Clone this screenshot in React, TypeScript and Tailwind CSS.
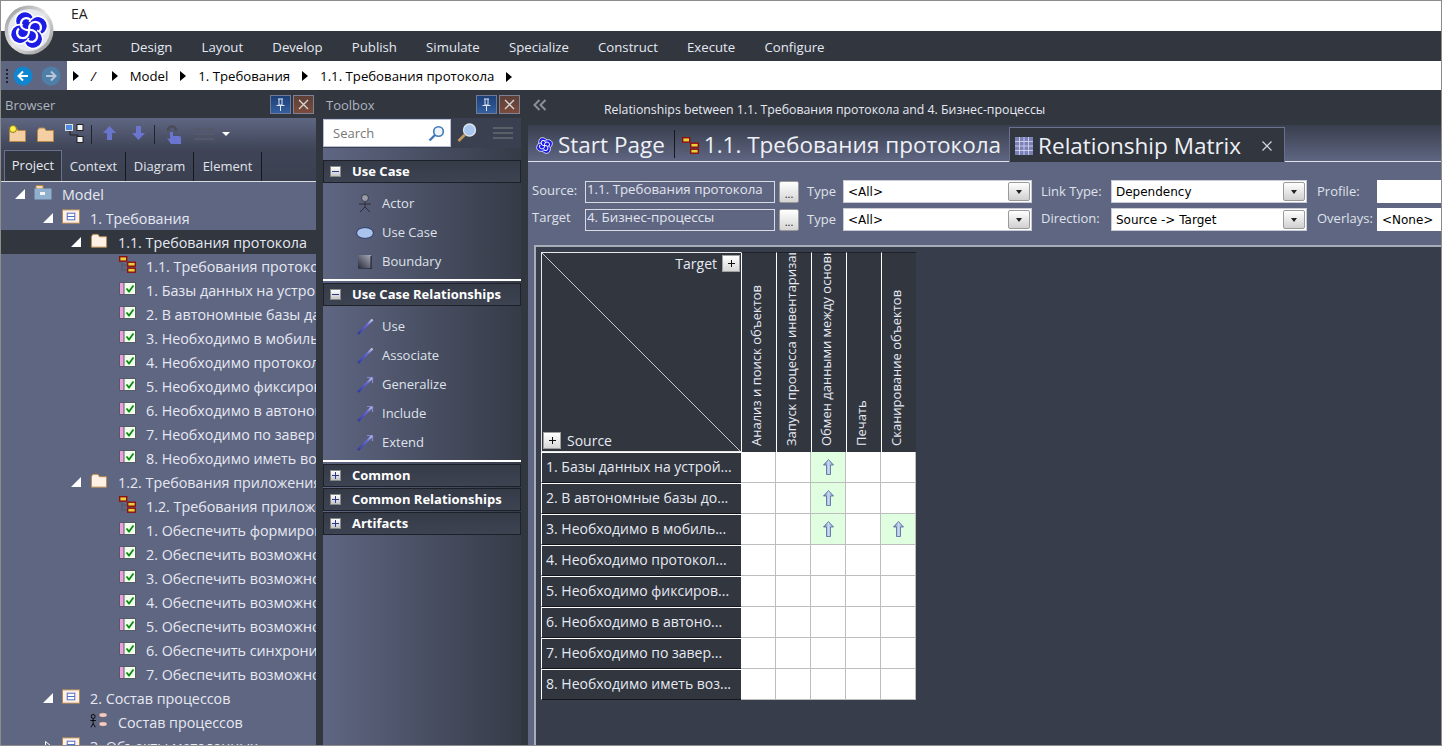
import { ReactNode } from 'react';

const ribbonTabs = ['Start', 'Design', 'Layout', 'Develop', 'Publish', 'Simulate', 'Specialize', 'Construct', 'Execute', 'Configure'];
const crumbs = ['/', 'Model', '1. Требования', '1.1. Требования протокола'];

type Kind = 'model' | 'package' | 'folder' | 'diagram' | 'req' | 'usecase';
interface Row {
  depth: 0 | 1 | 2 | 3;
  label: string;
  kind: Kind;
  toggle?: 'open' | 'closed';
  selected?: boolean;
}

const req = (label: string): Row => ({ depth: 3, label, kind: 'req' });

const rows: Row[] = [
  { depth: 0, label: 'Model', kind: 'model', toggle: 'open' },
  { depth: 1, label: '1. Требования', kind: 'package', toggle: 'open' },
  { depth: 2, label: '1.1. Требования протокола', kind: 'folder', toggle: 'open', selected: true },
  { depth: 3, label: '1.1. Требования протокола', kind: 'diagram' },
  req('1. Базы данных на устройстве'),
  req('2. В автономные базы данных'),
  req('3. Необходимо в мобильном'),
  req('4. Необходимо протоколировать'),
  req('5. Необходимо фиксировать'),
  req('6. Необходимо в автономном'),
  req('7. Необходимо по завершении'),
  req('8. Необходимо иметь возможность'),
  { depth: 2, label: '1.2. Требования приложения', kind: 'folder', toggle: 'open' },
  { depth: 3, label: '1.2. Требования приложения', kind: 'diagram' },
  req('1. Обеспечить формирование'),
  req('2. Обеспечить возможность'),
  req('3. Обеспечить возможность'),
  req('4. Обеспечить возможность'),
  req('5. Обеспечить возможность'),
  req('6. Обеспечить синхронизацию'),
  req('7. Обеспечить возможность'),
  { depth: 1, label: '2. Состав процессов', kind: 'package', toggle: 'open' },
  { depth: 2, label: 'Состав процессов', kind: 'usecase' },
  { depth: 1, label: '3. Объекты метаданных', kind: 'package', toggle: 'closed' },
];

const depthPad = ['pl-[15px]', 'pl-[43px]', 'pl-[71px]', 'pl-[99px]'];

const matrixCols = ['Анализ и поиск объектов', 'Запуск процесса инвентаризации', 'Обмен данными между основной', 'Печать', 'Сканирование объектов'];
const matrixRows = [
  { label: '1. Базы данных на устрой...', marks: [2] },
  { label: '2. В автономные базы до...', marks: [2] },
  { label: '3. Необходимо в мобиль...', marks: [2, 4] },
  { label: '4. Необходимо протокол...', marks: [] },
  { label: '5. Необходимо фиксиров...', marks: [] },
  { label: '6. Необходимо в автоно...', marks: [] },
  { label: '7. Необходимо по завер...', marks: [] },
  { label: '8. Необходимо иметь воз...', marks: [] },
];

function Logo({ size, ring = true }: { size: number; ring?: boolean }) {
  return (
    <svg width={size} height={size} viewBox="-25 -25 50 50">
      <defs>
        <linearGradient id="ring" x1="0" y1="0" x2="1" y2="1">
          <stop offset="0" stopColor="#8e8e8e" />
          <stop offset="0.5" stopColor="#e4e4e4" />
          <stop offset="1" stopColor="#8a8a8a" />
        </linearGradient>
      </defs>
      {ring && <circle r="24.5" fill="url(#ring)" />}
      {ring && <circle r="21" fill="#e6e8f0" />}
      <g transform="rotate(20)">
        {[0, 90, 180, 270].map((a) => (
          <circle key={a} transform={`rotate(${a})`} cx="-7" cy="-7" r="9.5" fill="#1c1ce6" stroke="#ffffff" strokeWidth="1.6" />
        ))}
        <circle r="8" fill="#1c1ce6" />
        {[0, 90, 180, 270].map((a) => (
          <path
            key={a}
            transform={`rotate(${a})`}
            d="M0 0 C-2 -4 -1 -9 4 -10 C9 -11 12 -6 10 -2"
            fill="none"
            stroke="#ffffff"
            strokeWidth="2.2"
          />
        ))}
      </g>
    </svg>
  );
}

function FolderIcon({ fill = '#f3cfa3', stroke = '#b78848', w = 19 }: { fill?: string; stroke?: string; w?: number }) {
  return (
    <svg width={w} height="17" viewBox="0 0 19 17">
      <path d="M1.5 4.5 V15.5 H17.5 V4.5 H10 L8.5 2 H3 L1.5 4.5 Z" fill={fill} stroke={stroke} />
    </svg>
  );
}

function ModelIcon() {
  return (
    <svg width="18" height="18" viewBox="0 0 18 18">
      <path d="M2 2.5 H9 V6 H2 Z" fill="#f7dcbc" stroke="#b78848" />
      <path d="M0.5 5.5 H17.5 V16.5 H0.5 Z" fill="#8fb0cf" />
      <rect x="6" y="9" width="5" height="3" fill="#f2f4f6" />
    </svg>
  );
}

function PackageIcon() {
  return (
    <svg width="19" height="15" viewBox="0 0 19 15">
      <rect x="0.5" y="0.5" width="18" height="14" fill="#fff1e6" stroke="#b58a52" />
      <rect x="5.5" y="4" width="8" height="7" fill="#ffffff" stroke="#4467c4" />
      <path d="M5.5 7.5 H13.5" stroke="#4467c4" />
    </svg>
  );
}

function DiagramTreeIcon({ w = 17 }: { w?: number }) {
  return (
    <svg width={w} height="17" viewBox="0 0 17 17">
      <path d="M3 5 V14 H8 M3 9 H8" fill="none" stroke="#555a66" strokeWidth="1.2" />
      <rect x="0.7" y="0.7" width="7" height="4.4" fill="#e8d23c" stroke="#8c1010" strokeWidth="1.4" />
      <rect x="8.7" y="6.2" width="7.6" height="4" fill="#e8d23c" stroke="#8c1010" strokeWidth="1.4" />
      <rect x="8.7" y="12.2" width="7.6" height="4" fill="#e8d23c" stroke="#8c1010" strokeWidth="1.4" />
    </svg>
  );
}

function RequirementIcon() {
  return (
    <svg width="17" height="13" viewBox="0 0 17 13">
      <rect x="0.5" y="0.5" width="16" height="12" fill="#efffe9" stroke="#555a66" />
      <rect x="1" y="1" width="4" height="11" fill="#eaa0da" />
      <path d="M5 1 V12" stroke="#555a66" />
      <path d="M7.5 6.5 L10 9.5 L14.5 3.5" fill="none" stroke="#0a8a10" strokeWidth="1.8" />
    </svg>
  );
}

function UseCaseDiagramIcon() {
  return (
    <svg width="20" height="19" viewBox="0 0 20 19">
      <circle cx="3.5" cy="5" r="2.2" fill="none" stroke="#000" />
      <path d="M3.5 7 V13 M0.5 9.5 H6.5 M3.5 13 L1 17 M3.5 13 L6 17" fill="none" stroke="#000" />
      <ellipse cx="14.5" cy="3.5" rx="4.5" ry="2.5" fill="#f6c9c4" stroke="#555" strokeWidth="0.5" />
      <ellipse cx="14.5" cy="13.5" rx="4.5" ry="2.5" fill="#f6c9c4" stroke="#555" strokeWidth="0.5" />
    </svg>
  );
}

function TreeIcon({ kind }: { kind: Kind }) {
  if (kind === 'model') return <ModelIcon />;
  if (kind === 'package') return <PackageIcon />;
  if (kind === 'folder') return <FolderIcon fill="#fff1e6" />;
  if (kind === 'diagram') return <DiagramTreeIcon />;
  if (kind === 'usecase') return <UseCaseDiagramIcon />;
  return <RequirementIcon />;
}

function Toggle({ state }: { state?: 'open' | 'closed' }) {
  if (!state) return <span className="w-[10px] shrink-0" />;
  return (
    <svg width="10" height="10" viewBox="0 0 10 10" className="shrink-0">
      {state === 'open' ? (
        <path d="M10 0 V10 H0 Z" fill="#ffffff" />
      ) : (
        <path d="M2.5 0.5 L8 5 L2.5 9.5 Z" fill="none" stroke="#ffffff" />
      )}
    </svg>
  );
}

function PaneButtons() {
  return (
    <div className="flex gap-[2px]">
      <div className="w-[21px] h-[19px] border border-[#6f7896] bg-gradient-to-b from-[#1d3f78] to-[#345f9e] flex items-center justify-center">
        <svg width="11" height="13" viewBox="0 0 11 13">
          <path d="M3 1 H8 M4 1 V7 H7 V1 M1.5 7.5 H9.5 M5.5 8 V13" fill="none" stroke="#dfe6f3" />
        </svg>
      </div>
      <div className="w-[21px] h-[19px] border border-[#7d8296] bg-gradient-to-b from-[#5c4038] to-[#7c4a3a] flex items-center justify-center">
        <svg width="11" height="11" viewBox="0 0 11 11">
          <path d="M1 1 L10 10 M10 1 L1 10" stroke="#d8d8d8" strokeWidth="1.3" />
        </svg>
      </div>
    </div>
  );
}

function BrowserToolbar() {
  return (
    <div className="h-[32px] shrink-0 bg-gradient-to-b from-[#5f6682] to-[#3f4557] flex items-center pl-[8px]">
      <div className="relative mr-[9px]">
        <FolderIcon />
        <span className="absolute left-[1px] -top-[1px] w-[8px] h-[8px] rounded-full bg-[#fff14a] border border-[#8a7a20]" />
      </div>
      <div className="mr-[10px]">
        <FolderIcon />
      </div>
      <svg width="19" height="19" viewBox="0 0 19 19" className="mb-[1px]">
        <path d="M5 6 V11 H13 V14" fill="none" stroke="#222" />
        <rect x="0.5" y="0.5" width="7" height="6" fill="#4d8de0" stroke="#ddd" />
        <rect x="12" y="0.5" width="6" height="6" fill="#f4f4f4" stroke="#222" />
        <rect x="12" y="12.5" width="6" height="6" fill="#f4f4f4" stroke="#222" />
      </svg>
      <span className="w-px h-[19px] bg-[#20242e] ml-[7px] mr-[11px]" />
      <svg width="13" height="14" viewBox="0 0 13 14" className="mb-[2px]">
        <path d="M6.5 0 L13 7 H9 V14 H4 V7 H0 Z" fill="#6a75d0" />
      </svg>
      <svg width="13" height="14" viewBox="0 0 13 14" className="ml-[16px] mb-[2px]">
        <path d="M6.5 14 L13 7 H9 V0 H4 V7 H0 Z" fill="#6a75d0" />
      </svg>
      <span className="w-px h-[19px] bg-[#20242e] ml-[9px] mr-[11px]" />
      <svg width="16" height="20" viewBox="0 0 16 20">
        <path d="M2 7 C2 1 10 1 10 7" fill="none" stroke="#4a4d58" strokeWidth="2.5" />
        <path d="M4 8 H7 V12 H13 Q15 12 15 14 V20 H5 L1 14 L4 15 Z" fill="#6a75d0" />
      </svg>
      <div className="ml-[12px] flex flex-col gap-[3px]">
        <span className="w-[20px] h-[2px] bg-[#55596a]" />
        <span className="w-[20px] h-[2px] bg-[#55596a]" />
        <span className="w-[20px] h-[2px] bg-[#55596a]" />
      </div>
      <span className="ml-[8px] w-0 h-0 border-x-[4px] border-x-transparent border-t-[4px] border-t-white" />
    </div>
  );
}

function Browser() {
  return (
    <div className="w-[316px] shrink-0 flex flex-col bg-[#5f6682] overflow-hidden">
      <div className="h-[28px] bg-[#31363f] flex items-center justify-between pr-[2px] pl-[5px] shrink-0">
        <span className="text-[13px] text-[#aeb4c0] mt-[3px]">Browser</span>
        <PaneButtons />
      </div>
      <BrowserToolbar />
      <div className="h-[32px] bg-gradient-to-b from-[#3f4557] to-[#3b4050] flex items-end pl-[4px] border-b border-[#d8dbe2] shrink-0">
        <div className="h-[31px] w-[58px] bg-[#31363f] border border-b-0 border-[#6a7190] flex items-center justify-center text-[13px] text-[#e6e8ee]">Project</div>
        {['Context', 'Diagram', 'Element'].map((tab, i) => (
          <div key={tab} className={`h-[29px] flex items-center justify-center text-[13px] text-[#e0e3ea] border-r border-[#16181e] ${i === 0 ? 'w-[64px]' : 'w-[68px]'}`}>
            {tab}
          </div>
        ))}
      </div>
      {rows.map((row, i) => (
        <div
          key={i}
          className={`h-[24px] shrink-0 flex items-center whitespace-nowrap text-[14.3px] text-[#e6e9f2] ${depthPad[row.depth]} ${row.selected ? 'bg-[#31363f]' : ''}`}
        >
          <Toggle state={row.toggle} />
          <span className="w-[18px] ml-[9px] shrink-0 flex justify-center mb-[4px]">
            <TreeIcon kind={row.kind} />
          </span>
          <span className="ml-[10px] mt-[2px]">{row.label}</span>
        </div>
      ))}
    </div>
  );
}

function SectionHeader({ title, open }: { title: string; open?: boolean }) {
  return (
    <div className="h-[23px] bg-gradient-to-b from-[#363b48] to-[#3e4352] border border-[#1e2129] flex items-center shrink-0">
      <span className="w-[11px] h-[11px] ml-[6px] bg-gradient-to-b from-white to-[#c4c4c4] border border-[#888] flex items-center justify-center">
        <svg width="7" height="7" viewBox="0 0 7 7">
          <path d={open ? 'M0 3.5 H7' : 'M0 3.5 H7 M3.5 0 V7'} stroke="#2a3a8a" />
        </svg>
      </span>
      <span className="ml-[11px] text-[13px] font-bold text-white">{title}</span>
    </div>
  );
}

function Connector({ head }: { head?: boolean }) {
  return (
    <svg width="17" height="17" viewBox="0 0 17 17">
      <defs>
        <linearGradient id="conn" x1="0" y1="1" x2="1" y2="0">
          <stop offset="0" stopColor="#3038a0" />
          <stop offset="0.65" stopColor="#6a6ad8" />
          <stop offset="1" stopColor="#c8d0e0" />
        </linearGradient>
      </defs>
      <path d="M1 16 L15.5 1.5" stroke="url(#conn)" strokeWidth="2.4" />
      {head && <path d="M10 1.5 H15.5 V7" fill="none" stroke="#8a88d8" strokeWidth="1.2" />}
    </svg>
  );
}

function ToolItem({ icon, label }: { icon: ReactNode; label: string }) {
  return (
    <div className="h-[29px] flex items-center">
      <span className="w-[18px] ml-[33px] flex justify-center">{icon}</span>
      <span className="ml-[8px] text-[13px] text-[#dfe2ea]">{label}</span>
    </div>
  );
}

function ToolBody({ children }: { children: ReactNode }) {
  return <div className="pt-[6px] pb-[3px] border-b-2 border-white mb-[2px]">{children}</div>;
}

function Toolbox() {
  return (
    <div className="w-[198px] shrink-0 flex flex-col">
      <div className="h-[28px] bg-[#31363f] flex items-center justify-between pr-[1px] pl-[3px] shrink-0">
        <span className="text-[13px] text-[#aeb4c0] mt-[3px]">Toolbox</span>
        <PaneButtons />
      </div>
      <div className="h-[30px] bg-[#3b4050] flex items-center shrink-0">
        <div className="w-[128px] h-[28px] bg-white border border-[#b9c0d6] flex items-center justify-between pl-[9px] pr-[5px] text-[13px] text-[#777]">
          <span className="mt-[1px]">Search</span>
          <svg width="17" height="17" viewBox="0 0 17 17">
            <circle cx="10.5" cy="6.5" r="4.8" fill="#eef4fb" stroke="#3f78b8" strokeWidth="1.6" />
            <path d="M7 10 L1.5 15.5" stroke="#3f78b8" strokeWidth="2.4" />
          </svg>
        </div>
        <svg width="20" height="20" viewBox="0 0 20 20" className="ml-[6px]">
          <circle cx="12.5" cy="7" r="6" fill="#a9c6ee" stroke="#dfe6f0" strokeWidth="1.3" />
          <path d="M8 11.5 L1.5 18" stroke="#c09a60" strokeWidth="2.6" />
        </svg>
        <div className="ml-[16px] flex flex-col gap-[3px]">
          <span className="w-[20px] h-[2px] bg-[#5b5f68]" />
          <span className="w-[20px] h-[2px] bg-[#5b5f68]" />
          <span className="w-[20px] h-[2px] bg-[#5b5f68]" />
        </div>
      </div>
      <div className="flex-1 pt-[12px] bg-gradient-to-r from-[#5f6682] to-[#363b48]">
        <SectionHeader title="Use Case" open />
        <ToolBody>
          <ToolItem
            label="Actor"
            icon={
              <svg width="14" height="19" viewBox="0 0 14 19">
                <circle cx="7" cy="4" r="3.5" fill="#9a9da8" stroke="#3a3d48" />
                <path d="M7 8 V13 M1 10 H13 M7 13 L2 18 M7 13 L12 18" fill="none" stroke="#2c2f38" />
              </svg>
            }
          />
          <ToolItem
            label="Use Case"
            icon={
              <svg width="18" height="12" viewBox="0 0 18 12">
                <ellipse cx="9" cy="6" rx="8.4" ry="5.4" fill="#a9c3ee" stroke="#2a3a6a" />
              </svg>
            }
          />
          <ToolItem
            label="Boundary"
            icon={
              <svg width="14" height="14" viewBox="0 0 14 14">
                <defs>
                  <linearGradient id="bnd" x1="0" y1="1" x2="1" y2="0">
                    <stop offset="0" stopColor="#2a2c3c" />
                    <stop offset="1" stopColor="#a8aab8" />
                  </linearGradient>
                </defs>
                <rect width="13" height="13" fill="url(#bnd)" />
                <path d="M13 1 V14 H0" fill="none" stroke="#15161e" />
              </svg>
            }
          />
        </ToolBody>
        <SectionHeader title="Use Case Relationships" open />
        <ToolBody>
          <ToolItem label="Use" icon={<Connector />} />
          <ToolItem label="Associate" icon={<Connector />} />
          <ToolItem label="Generalize" icon={<Connector head />} />
          <ToolItem label="Include" icon={<Connector head />} />
          <ToolItem label="Extend" icon={<Connector head />} />
        </ToolBody>
        <div className="flex flex-col gap-[1px]">
          <SectionHeader title="Common" />
          <SectionHeader title="Common Relationships" />
          <SectionHeader title="Artifacts" />
        </div>
      </div>
    </div>
  );
}

function Field({ value, className }: { value: string; className: string }) {
  return (
    <div className={`h-[22px] shrink-0 bg-[#5f6682] border border-[#d8dbe4] pl-[1px] text-[13.3px] leading-[15px] text-[#e2e5ee] whitespace-nowrap overflow-hidden ${className}`}>
      {value}
    </div>
  );
}

function DotsButton() {
  return (
    <div className="w-[20px] h-[22px] shrink-0 ml-[4px] bg-gradient-to-b from-white to-[#d5d5d5] border border-[#9a9a9a] rounded-[2px] flex items-end justify-center text-[11px] leading-[16px] text-[#222]">
      ...
    </div>
  );
}

function Select({ value, className }: { value: string; className: string }) {
  return (
    <div className={`h-[23px] shrink-0 bg-white border border-[#c9ccd6] flex items-center justify-between pl-[4px] pr-[1px] text-[12px] text-black font-['DejaVu_Sans',sans-serif] ${className}`}>
      {value}
      <span className="w-[22px] h-[19px] bg-gradient-to-b from-white to-[#d0d0d0] border border-[#9a9a9a] rounded-[2px] flex items-center justify-center">
        <span className="w-0 h-0 border-x-[3.5px] border-x-transparent border-t-[4px] border-t-[#222]" />
      </span>
    </div>
  );
}

function FormLabel({ text, className }: { text: string; className: string }) {
  return <span className={`text-[13px] text-[#dfe2ea] whitespace-nowrap shrink-0 ${className}`}>{text}</span>;
}

function UpArrow() {
  return (
    <svg width="11" height="16" viewBox="0 0 11 16">
      <defs>
        <linearGradient id="up" x1="0" y1="0" x2="1" y2="0">
          <stop offset="0" stopColor="#5c74a8" />
          <stop offset="0.5" stopColor="#cdd9f2" />
          <stop offset="1" stopColor="#7d93c4" />
        </linearGradient>
      </defs>
      <path d="M5.5 0.5 L10.5 6 H7.5 V15.5 H3.5 V6 H0.5 Z" fill="url(#up)" stroke="#50689c" strokeWidth="0.8" />
    </svg>
  );
}

function PlusBox() {
  return (
    <span className="w-[18px] h-[17px] bg-gradient-to-b from-white to-[#d8d8d8] border border-[#a0a0a0] flex items-center justify-center">
      <svg width="7" height="7" viewBox="0 0 7 7">
        <path d="M0 3.5 H7 M3.5 0 V7" stroke="#111" />
      </svg>
    </span>
  );
}

function Matrix() {
  return (
    <div className="grid grid-cols-[200px_repeat(5,35px)] w-fit">
      <div className="relative h-[200px] bg-[#31363f] border border-[#e8e8e8] border-r-0 text-[14px] text-[#e6e9f2]">
        <svg width="198" height="198" className="absolute left-0 top-0">
          <line x1="0" y1="0" x2="198" y2="198" stroke="#c4c8d0" />
        </svg>
        <div className="absolute right-[1px] top-0 flex items-center gap-[5px]">
          Target
          <PlusBox />
        </div>
        <div className="absolute left-[1px] bottom-0 flex items-center gap-[6px]">
          <PlusBox />
          Source
        </div>
      </div>
      {matrixCols.map((col) => (
        <div key={col} className="h-[200px] bg-[#31363f] border-l border-white border-t border-t-[#1e2129] overflow-hidden">
          <div className="h-[193px] w-[34px] overflow-hidden whitespace-nowrap text-[13px] leading-[29px] text-[#e6e9f2] [writing-mode:vertical-rl] rotate-180">
            {col}
          </div>
        </div>
      ))}
      {matrixRows.map((row) => (
        <div key={row.label} className="contents">
          <div className="h-[31px] bg-[#31363f] border-t border-l border-white border-b border-b-[#14161b] flex items-center pl-[4px] pb-[1px] text-[14px] text-[#e6e9f2] whitespace-nowrap overflow-hidden">
            {row.label}
          </div>
          {matrixCols.map((_, c) => (
            <div
              key={c}
              className={`h-[31px] border-r border-b border-[#bdbdbd] flex items-center justify-center ${row.marks.includes(c) ? 'bg-[#e0ffe0]' : 'bg-white'}`}
            >
              {row.marks.includes(c) && <UpArrow />}
            </div>
          ))}
        </div>
      ))}
    </div>
  );
}

function MainPane() {
  return (
    <div className="flex-1 min-w-0 flex flex-col bg-[#5f6682]">
      <div className="h-[35px] bg-[#31363f] flex items-center shrink-0">
        <svg width="14" height="12" viewBox="0 0 14 12" className="ml-[5px] mb-[6px] shrink-0">
          <path d="M6.5 1 L1.5 6 L6.5 11 M12.5 1 L7.5 6 L12.5 11" fill="none" stroke="#8a8f9c" strokeWidth="2" />
        </svg>
        <span className="ml-[57px] mt-[6px] text-[12.3px] text-[#e6e9f2] whitespace-nowrap">Relationships between 1.1. Требования протокола and 4. Бизнес-процессы</span>
      </div>
      <div className="h-[37px] bg-gradient-to-b from-[#3a3f4e] to-[#5f6682] border-b border-[#dfe2ea] flex items-end shrink-0 text-[22.5px] text-[#eef0f6] whitespace-nowrap">
        <div className="h-[36px] flex items-center pl-[6px] pt-[4px]">
          <Logo size={21} ring={false} />
          <span className="ml-[3px]">Start Page</span>
        </div>
        <span className="w-px h-[28px] bg-[#16181e] ml-[9px] mb-[3px]" />
        <div className="h-[36px] flex items-center pl-[7px] pt-[4px]">
          <DiagramTreeIcon w={17} />
          <span className="ml-[5px]">1.1. Требования протокола</span>
        </div>
        <div className="relative -mb-px h-[35px] w-[276px] ml-[8px] bg-[#31363f] border border-b-0 border-[#6a7190] flex items-center pl-[5px] pt-[2px]">
          <svg width="18" height="18" viewBox="0 0 18 18">
            <rect width="18" height="18" fill="#7a80b8" />
            <path d="M0 4.5 H18 M0 9 H18 M0 13.5 H18 M4.5 0 V18 M9 0 V18 M13.5 0 V18" stroke="#d8dcec" strokeWidth="0.8" />
          </svg>
          <span className="ml-[5px]">Relationship Matrix</span>
          <svg width="10" height="10" viewBox="0 0 10 10" className="ml-[21px]">
            <path d="M0.5 0.5 L9.5 9.5 M9.5 0.5 L0.5 9.5" stroke="#d8dbe4" strokeWidth="1.1" />
          </svg>
        </div>
      </div>
      <div className="pt-[18px] flex flex-col gap-[5px] overflow-hidden shrink-0">
        <div className="flex items-center">
          <FormLabel text="Source:" className="w-[53px] ml-[4px] mb-[2px]" />
          <Field value="1.1. Требования протокола" className="w-[190px]" />
          <DotsButton />
          <FormLabel text="Type" className="w-[36px] ml-[8px]" />
          <Select value="<All>" className="w-[189px]" />
          <FormLabel text="Link Type:" className="w-[70px] ml-[9px]" />
          <Select value="Dependency" className="w-[196px]" />
          <FormLabel text="Profile:" className="w-[60px] ml-[10px]" />
          <div className="h-[23px] w-[70px] bg-white shrink-0" />
        </div>
        <div className="flex items-center">
          <FormLabel text="Target" className="w-[53px] ml-[4px] mb-[4px]" />
          <Field value="4. Бизнес-процессы" className="w-[190px]" />
          <DotsButton />
          <FormLabel text="Type" className="w-[36px] ml-[8px]" />
          <Select value="<All>" className="w-[189px]" />
          <FormLabel text="Direction:" className="w-[70px] ml-[9px] mb-[3px]" />
          <Select value="Source -> Target" className="w-[196px]" />
          <FormLabel text="Overlays:" className="w-[60px] ml-[10px] mb-[3px]" />
          <div className="h-[23px] w-[70px] bg-white shrink-0 flex items-center pl-[5px] text-[12px] text-black font-['DejaVu_Sans',sans-serif]">{'<None>'}</div>
        </div>
      </div>
      <div className="flex-1 mt-[13px] ml-[6px] bg-[#383d4c] border-t-2 border-l-2 border-[#a9adb8] pt-[5px] pl-[5px]">
        <Matrix />
      </div>
    </div>
  );
}

export default function App() {
  return (
    <div className="relative w-[1442px] h-[746px] overflow-hidden flex flex-col bg-[#31363f] font-['Open_Sans',sans-serif]">
      <div className="h-[31px] bg-white flex items-center pl-[71px] pb-[4px] text-[14px] text-[#222] shrink-0">EA</div>
      <div className="h-[30px] bg-[#31363f] flex items-center pl-[72px] pt-[4px] gap-[29.2px] text-[13.2px] text-[#e6e9f2] shrink-0">
        {ribbonTabs.map((tab) => (
          <span key={tab}>{tab}</span>
        ))}
      </div>
      <div className="h-[29px] bg-[#5f6682] flex items-center pl-[6px] shrink-0">
        <span className="w-[2px] h-[14px] border-l-2 border-dotted border-[#20242e]" />
        <svg width="20" height="20" viewBox="0 0 20 20" className="ml-[5px]">
          <circle cx="10" cy="10" r="9.5" fill="#0f86cf" />
          <path d="M15 10 H6 M10 5.5 L5.5 10 L10 14.5" fill="none" stroke="#fff" strokeWidth="2" />
        </svg>
        <svg width="20" height="20" viewBox="0 0 20 20" className="ml-[8px]">
          <circle cx="10" cy="10" r="9.5" fill="#4d7fa8" />
          <path d="M5 10 H14 M10 5.5 L14.5 10 L10 14.5" fill="none" stroke="#b8c6d8" strokeWidth="2" />
        </svg>
        <div className="flex-1 h-[29px] ml-[6px] pt-[2px] bg-white flex items-center pl-[6px] gap-[12px] text-[13.2px] text-black whitespace-nowrap">
          {crumbs.map((c) => (
            <div key={c} className="flex items-center gap-[12px]">
              <span className="w-0 h-0 border-y-[5px] border-y-transparent border-l-[6px] border-l-black" />
              <span className={c === '/' ? 'italic mr-[4px]' : ''}>{c}</span>
            </div>
          ))}
          <span className="w-0 h-0 border-y-[5px] border-y-transparent border-l-[6px] border-l-black" />
        </div>
      </div>
      <div className="flex-1 min-h-0 flex">
        <Browser />
        <div className="w-[7px] shrink-0 bg-[#31363f]" />
        <Toolbox />
        <div className="w-[7px] shrink-0 bg-[#31363f]" />
        <MainPane />
      </div>
      <div className="absolute left-[4px] top-[5px]">
        <Logo size={50} />
      </div>
      <div className="absolute inset-0 border border-[#8c8c8c] pointer-events-none" />
    </div>
  );
}
